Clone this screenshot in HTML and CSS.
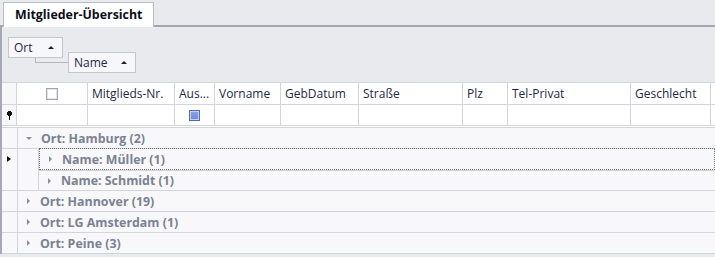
FILE: index.html
```html
<!DOCTYPE html>
<html lang="de">
<head>
    <meta charset="UTF-8">
    <title>Mitglieder-Übersicht</title>
    <link rel="stylesheet" href="styles.css">
</head>
<body>
    <div class="tabstrip">
        <div class="tab">Mitglieder-Übersicht</div>
    </div>
    <div class="panel">
        <div class="group-panel">
            <div class="gbox gbox-ort">Ort <span class="sort-up"></span></div>
            <div class="gbox gbox-name">Name <span class="sort-up"></span></div>
        </div>

        <div class="grid">
            <div class="grid-row head">
                <div class="cell ind"></div>
                <div class="cell center"><span class="chk"></span></div>
                <div class="cell">Mitglieds-Nr.</div>
                <div class="cell">Aus...</div>
                <div class="cell">Vorname</div>
                <div class="cell">GebDatum</div>
                <div class="cell">Straße</div>
                <div class="cell">Plz</div>
                <div class="cell">Tel-Privat</div>
                <div class="cell">Geschlecht</div>
                <div class="cell"></div>
            </div>
            <div class="grid-row filter">
                <div class="cell ind">
                    <svg width="5" height="9" viewBox="0 0 5 9"><rect x="1" y="0" width="3" height="1" fill="#111"/><rect x="0" y="1" width="5" height="3" fill="#111"/><rect x="1" y="4" width="3" height="1" fill="#111"/><rect x="2" y="5" width="1" height="4" fill="#111"/></svg>
                </div>
                <div class="cell"></div>
                <div class="cell"></div>
                <div class="cell center"><span class="chk-blue"></span></div>
                <div class="cell"></div>
                <div class="cell"></div>
                <div class="cell"></div>
                <div class="cell"></div>
                <div class="cell"></div>
                <div class="cell"></div>
                <div class="cell"></div>
            </div>

            <div class="rows">
                <div class="grow">
                    <div class="ind"></div>
                    <div class="gcontent"><span class="arrow-down"></span>Ort: Hamburg (2)</div>
                </div>
                <div class="grow sub">
                    <div class="ind"><span class="focus-mark"></span></div>
                    <div class="indent"></div>
                    <div class="gcontent focused"><span class="arrow-right"></span>Name: Müller (1)</div>
                </div>
                <div class="grow sub">
                    <div class="ind"></div>
                    <div class="indent"></div>
                    <div class="gcontent"><span class="arrow-right"></span>Name: Schmidt (1)</div>
                </div>
                <div class="grow">
                    <div class="ind"></div>
                    <div class="gcontent"><span class="arrow-right"></span>Ort: Hannover (19)</div>
                </div>
                <div class="grow">
                    <div class="ind"></div>
                    <div class="gcontent"><span class="arrow-right"></span>Ort: LG Amsterdam (1)</div>
                </div>
                <div class="grow">
                    <div class="ind"></div>
                    <div class="gcontent"><span class="arrow-right"></span>Ort: Peine (3)</div>
                </div>
            </div>
        </div>
    </div>
</body>
</html>
```

FILE: styles.css
```css
body {
    margin: 0;
    padding: 0;
    background-color: #e9eaee;
    font-family: "Open Sans", Arial, sans-serif;
    font-size: 12px;
    color: #1f2747;
    overflow: hidden;
}

/* tab strip */
.tabstrip {
    height: 25px;
    display: flex;
    align-items: flex-end;
    padding-left: 3px;
    border-bottom: 2px solid #a3a6b0;
}
.tab {
    height: 24px;
    margin-bottom: -2px;
    padding: 0 10px 0 11px;
    background-color: #fff;
    border: 1px solid #b9bcc5;
    border-bottom: none;
    font-weight: bold;
    font-size: 12.4px;
    line-height: 24px;
    color: #0d0d18;
}

.panel {
    border-left: 2px solid #a6a8b4;
    background-color: #fff;
}

/* group by area */
.group-panel {
    height: 55px;
    position: relative;
    background-color: #e9eaee;
}
.gbox {
    position: absolute;
    height: 19px;
    line-height: 19px;
    padding-left: 5px;
    background-color: #f7f7f9;
    border: 1px solid #c4c6cd;
    color: #1f2747;
}
.gbox-ort {
    left: 6px;
    top: 10px;
    width: 48px;
}
.gbox-name {
    left: 66px;
    top: 25px;
    width: 61px;
}
.group-panel::before {
    content: "";
    position: absolute;
    left: 33px;
    top: 31px;
    width: 33px;
    height: 4px;
    border-left: 1px solid #b4b7c0;
    border-bottom: 1px solid #b4b7c0;
}
.sort-up {
    position: absolute;
    right: 8px;
    top: 8px;
    width: 0;
    height: 0;
    border-left: 3px solid transparent;
    border-right: 3px solid transparent;
    border-bottom: 3px solid #1c1c2c;
}

/* grid */
.grid {
    background-color: #fff;
}
.grid-row {
    display: grid;
    grid-template-columns: 15px 71px 87px 40px 66px 78px 104px 45px 123px 80px 1fr;
    background-color: #fff;
}
.grid-row.head {
    height: 21px;
    border-top: 1px solid #d4d5db;
    border-bottom: 1px solid #d4d5db;
}
.grid-row.filter {
    height: 20px;
    border-bottom: 1px solid #d4d5db;
}
.cell {
    border-right: 1px solid #d4d5db;
    padding-left: 4px;
    line-height: 21px;
    white-space: nowrap;
    overflow: hidden;
}
.cell.ind {
    background-color: #f7f7f9;
    padding-left: 5px;
    display: flex;
    align-items: center;
}
.cell.center {
    padding: 0;
    display: flex;
    justify-content: center;
    align-items: center;
}
.chk {
    width: 10px;
    height: 10px;
    border: 1px solid #a3a6ae;
    box-shadow: inset 0 0 0 1px #e4e5e8;
    background-color: #fff;
}
.chk-blue {
    width: 9px;
    height: 9px;
    border: 1px solid #4d6cb3;
    box-shadow: inset 0 0 0 1px #c3d0f0;
    background: linear-gradient(#8ea6e4, #6a88d6);
}

.rows {
    border-top: 1px solid #d4d5db;
    margin-top: 1px;
}
.grow {
    display: flex;
    height: 20px;
    border-bottom: 1px solid #d4d5db;
    background-color: #f8f8fa;
}
.grow.sub {
    border-bottom: none;
    height: 21px;
}
.grow.sub + .grow.sub {
    border-bottom: 1px solid #d4d5db;
    height: 20px;
}
.grow .ind {
    width: 15px;
    flex-shrink: 0;
    border-right: 1px solid #d4d5db;
    position: relative;
}
.indent {
    width: 20px;
    flex-shrink: 0;
    border-right: 1px solid #d4d5db;
}
.gcontent {
    flex: 1;
    display: flex;
    align-items: center;
    font-weight: bold;
    font-size: 12.4px;
    color: #7a8292;
    white-space: nowrap;
}
.gcontent.focused {
    border: 1px dotted #6f7178;
    margin: -1px 0 0 0;
}
.grow.sub + .grow.sub .gcontent {
    border-top: 1px solid #d4d5db;
}
.arrow-down {
    width: 0;
    height: 0;
    margin: 0 9px 0 8px;
    border-left: 3px solid transparent;
    border-right: 3px solid transparent;
    border-top: 3px solid #8a8e99;
}
.arrow-right {
    width: 0;
    height: 0;
    margin: 0 10px 0 9px;
    border-top: 3px solid transparent;
    border-bottom: 3px solid transparent;
    border-left: 3px solid #8a8e99;
}
.focus-mark {
    position: absolute;
    left: 5px;
    top: 7px;
    width: 0;
    height: 0;
    border-top: 3px solid transparent;
    border-bottom: 3px solid transparent;
    border-left: 4px solid #111;
}
```
